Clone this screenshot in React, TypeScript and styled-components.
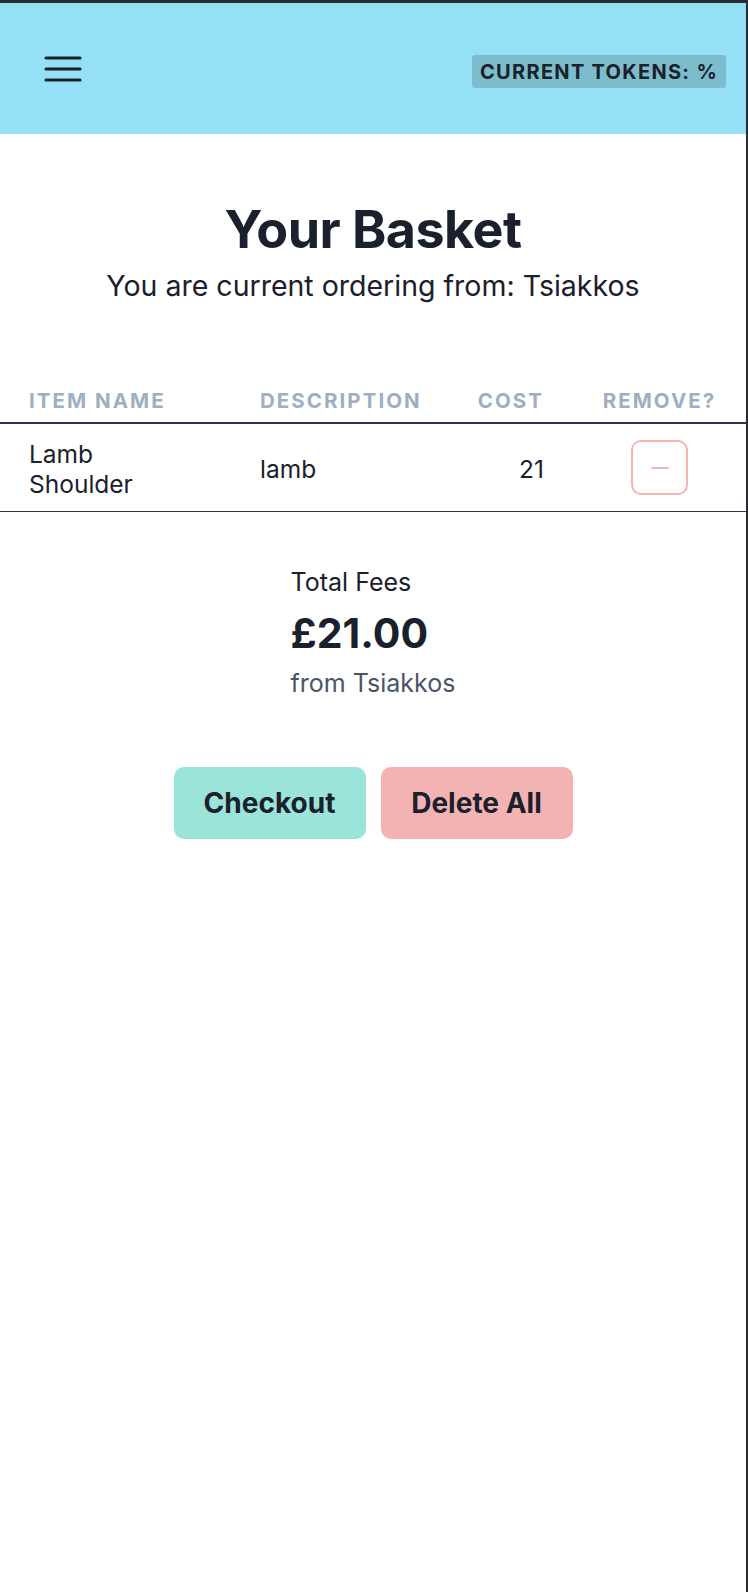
import React from 'react'
import styled, { createGlobalStyle } from 'styled-components'

const GlobalStyle = createGlobalStyle`
  html, body {
    margin: 0;
    padding: 0;
    background: #2a2b2f;
  }
  body {
    font-family: Inter, "Noto Sans", "Liberation Sans", sans-serif;
    color: #1a202c;
  }
  * { box-sizing: border-box; }
`

const StyledFrame = styled.div`
  margin-top: 3px;
  width: 746px;
  min-height: 1589px;
  background: #ffffff;
  display: flex;
  flex-direction: column;
`
const StyledNavbar = styled.header`
  height: 131px;
  background: #94e1f5;
  display: flex;
  align-items: center;
  justify-content: space-between;
  padding: 0 20px 0 44px;
`
const StyledMenuButton = styled.button`
  border: none;
  background: none;
  padding: 0;
  display: flex;
  cursor: pointer;
  margin-top: 0;
`
const StyledTokenBadge = styled.div`
  background: #7cbdcd;
  border-radius: 3px;
  padding: 5px 8px 4px 8px;
  font-size: 20px;
  line-height: 24px;
  font-weight: 700;
  letter-spacing: 0.065em;
  color: #1a202c;
  text-transform: uppercase;
  margin-top: 5px;
`
const StyledHeading = styled.section`
  display: flex;
  flex-direction: column;
  align-items: center;
  padding-top: 66px;
`
const StyledTitle = styled.h1`
  margin: 0;
  font-size: 52px;
  line-height: 60px;
  font-weight: 700;
  letter-spacing: -0.01em;
`
const StyledSubtitle = styled.p`
  margin: 0;
  margin-top: 9px;
  font-size: 28.5px;
  line-height: 34px;
  color: #1a202c;
`
const StyledTable = styled.div`
  margin-top: 85px;
  display: grid;
  grid-template-columns: 231px 209px 133px 1fr;
`
const StyledHeadCell = styled.div<{ $align?: string }>`
  padding: 0 29px 8px 29px;
  text-align: ${props => props.$align || 'left'};
  font-size: 20.5px;
  font-weight: 700;
  letter-spacing: 0.1em;
  color: #a0aec0;
  text-transform: uppercase;
  border-bottom: 2px solid #2d3748;
  line-height: 26px;
`
const StyledCell = styled.div<{ $align?: string }>`
  padding: 15px 29px 12px 29px;
  display: flex;
  align-items: center;
  justify-content: ${props =>
    props.$align === 'right' ? 'flex-end' : props.$align === 'center' ? 'center' : 'flex-start'};
  font-size: 24.5px;
  line-height: 30px;
  color: #1a202c;
  border-bottom: 1px solid #2d3748;
`
const StyledItemName = styled.span`
  max-width: 150px;
`
const StyledRemoveButton = styled.button`
  width: 57px;
  height: 55px;
  border: 2px solid #f5b5b5;
  border-radius: 10px;
  background: #ffffff;
  display: flex;
  align-items: center;
  justify-content: center;
  cursor: pointer;
  padding: 0;
  margin-top: -3px;
`
const StyledMinus = styled.span`
  width: 18px;
  height: 2px;
  background: #f5b5b5;
  border-radius: 1px;
`
const StyledSummary = styled.section`
  align-self: center;
  margin-top: 55px;
  display: flex;
  flex-direction: column;
  align-items: flex-start;
`
const StyledSummaryLabel = styled.div`
  font-size: 25px;
  line-height: 30px;
`
const StyledSummaryTotal = styled.div`
  margin-top: 12px;
  font-size: 41px;
  line-height: 48px;
  font-weight: 700;
`
const StyledSummaryFrom = styled.div`
  margin-top: 11px;
  font-size: 25px;
  line-height: 30px;
  color: #4a5568;
`
const StyledActions = styled.div`
  margin-top: 69px;
  display: flex;
  justify-content: center;
  gap: 15px;
`
const StyledActionButton = styled.button<{ $variant: 'checkout' | 'delete' }>`
  width: 192px;
  height: 72px;
  border: none;
  border-radius: 10px;
  background: ${props => (props.$variant === 'checkout' ? '#9be4d9' : '#f3b3b3')};
  font-family: inherit;
  font-size: 28px;
  font-weight: 700;
  color: #1a202c;
  cursor: pointer;
`

const App: React.FC = () => {
  const restaurant = 'Tsiakkos'
  const items = [{ name: 'Lamb Shoulder', description: 'lamb', cost: 21 }]
  const total = items.reduce((sum, item) => sum + item.cost, 0)

  return (
    <>
      <GlobalStyle />
      <StyledFrame>
        <StyledNavbar>
          <StyledMenuButton aria-label="menu">
            <svg width="38" height="26" viewBox="0 0 38 26">
              <g stroke="#1a202c" strokeWidth="3.2" strokeLinecap="round">
                <line x1="2" y1="2" x2="36" y2="2" />
                <line x1="2" y1="13" x2="36" y2="13" />
                <line x1="2" y1="24" x2="36" y2="24" />
              </g>
            </svg>
          </StyledMenuButton>
          <StyledTokenBadge>Current Tokens: %</StyledTokenBadge>
        </StyledNavbar>

        <StyledHeading>
          <StyledTitle>Your Basket</StyledTitle>
          <StyledSubtitle>You are current ordering from: {restaurant}</StyledSubtitle>
        </StyledHeading>

        <StyledTable>
          <StyledHeadCell>Item Name</StyledHeadCell>
          <StyledHeadCell>Description</StyledHeadCell>
          <StyledHeadCell $align="right">Cost</StyledHeadCell>
          <StyledHeadCell $align="center">Remove?</StyledHeadCell>
          {items.map(item => (
            <React.Fragment key={item.name}>
              <StyledCell>
                <StyledItemName>{item.name}</StyledItemName>
              </StyledCell>
              <StyledCell>{item.description}</StyledCell>
              <StyledCell $align="right">{item.cost}</StyledCell>
              <StyledCell $align="center">
                <StyledRemoveButton aria-label="remove">
                  <StyledMinus />
                </StyledRemoveButton>
              </StyledCell>
            </React.Fragment>
          ))}
        </StyledTable>

        <StyledSummary>
          <StyledSummaryLabel>Total Fees</StyledSummaryLabel>
          <StyledSummaryTotal>£{total.toFixed(2)}</StyledSummaryTotal>
          <StyledSummaryFrom>from {restaurant}</StyledSummaryFrom>
        </StyledSummary>

        <StyledActions>
          <StyledActionButton $variant="checkout">Checkout</StyledActionButton>
          <StyledActionButton $variant="delete">Delete All</StyledActionButton>
        </StyledActions>
      </StyledFrame>
    </>
  )
}

export default App
